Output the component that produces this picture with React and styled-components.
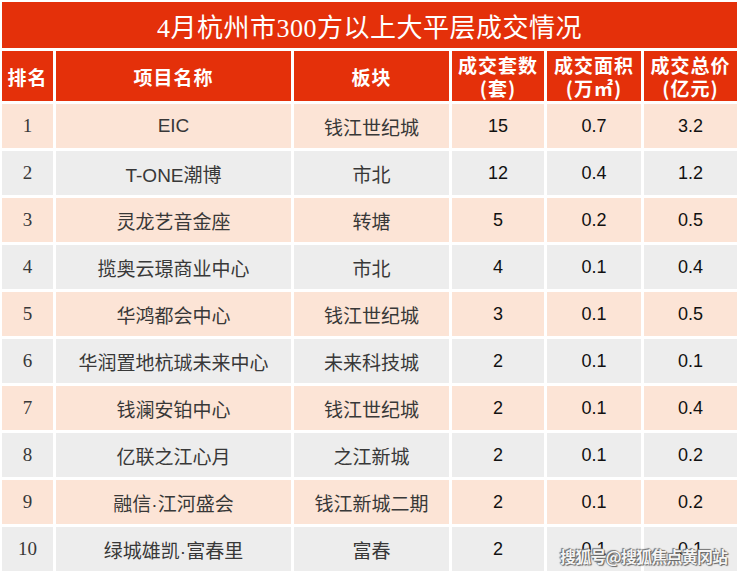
import React from "react";
import styled, { createGlobalStyle } from "styled-components";

const GlobalStyle = createGlobalStyle`
  html, body { margin: 0; padding: 0; background: #fff; }
  body { font-family: "Liberation Sans", "Noto Sans CJK SC", sans-serif; }
`;

const rows = [
  ["1", "EIC", "钱江世纪城", "15", "0.7", "3.2"],
  ["2", "T-ONE潮博", "市北", "12", "0.4", "1.2"],
  ["3", "灵龙艺音金座", "转塘", "5", "0.2", "0.5"],
  ["4", "揽奥云璟商业中心", "市北", "4", "0.1", "0.4"],
  ["5", "华鸿都会中心", "钱江世纪城", "3", "0.1", "0.5"],
  ["6", "华润置地杭珹未来中心", "未来科技城", "2", "0.1", "0.1"],
  ["7", "钱澜安铂中心", "钱江世纪城", "2", "0.1", "0.4"],
  ["8", "亿联之江心月", "之江新城", "2", "0.1", "0.2"],
  ["9", "融信·江河盛会", "钱江新城二期", "2", "0.1", "0.2"],
  ["10", "绿城雄凯·富春里", "富春", "2", "0.1", "0.1"],
];

const Page = styled.div`
  position: relative;
  width: 740px;
  height: 577px;
  padding: 2px 0 0 2px;
  box-sizing: border-box;
  overflow: hidden;
`;

const Table = styled.div`
  display: grid;
  grid-template-columns: 51px 235px 155px 92px 94px 93px;
  grid-template-rows: 46px 50px;
  grid-auto-rows: 44px;
  gap: 3px;
`;

const Title = styled.div`
  grid-column: 1 / -1;
  background: #e4300a;
  color: #fff;
  display: flex;
  align-items: center;
  justify-content: center;
  font-family: "Liberation Serif", "Noto Sans CJK SC", serif;
  font-size: 26px;
  letter-spacing: 0.5px;
  padding-top: 1px;
`;

const Head = styled.div`
  background: #e4300a;
  color: #fff;
  display: flex;
  align-items: center;
  justify-content: center;
  text-align: center;
  white-space: nowrap;
  font-family: "Noto Sans CJK SC", sans-serif;
  font-weight: 700;
  font-size: 19px;
  line-height: 23px;
  letter-spacing: 1px;
`;

const Cell = styled.div`
  background: ${(p) => (p.$odd ? "#fce4d6" : "#ededed")};
  display: flex;
  align-items: center;
  justify-content: center;
  color: ${(p) => (p.$num ? "#111" : "#383838")};
  font-family: ${(p) =>
    p.$serif
      ? `"Liberation Serif", serif`
      : `"Liberation Sans", "Noto Sans CJK SC", sans-serif`};
  font-size: ${(p) => (p.$num ? "18px" : "19px")};
  white-space: nowrap;
`;

const Watermark = styled.div`
  position: absolute;
  left: 560px;
  top: 546px;
  white-space: nowrap;
  font-family: "Noto Sans CJK SC", sans-serif;
  font-weight: 700;
  font-size: 16px;
  line-height: 20px;
  color: rgba(255, 255, 255, 0.95);
  text-shadow: 0 0 1px #555, 1px 1px 1px #666, -1px -1px 1px #777;
  letter-spacing: -0.8px;
`;

const headers = [
  ["排名"],
  ["项目名称"],
  ["板块"],
  ["成交套数", "(套)"],
  ["成交面积", "(万㎡)"],
  ["成交总价", "(亿元)"],
];

export default function App() {
  return (
    <Page>
      <GlobalStyle />
      <Table>
        <Title>4月杭州市300方以上大平层成交情况</Title>
        {headers.map((h, i) => (
          <Head key={i}>
            {h.map((line, j) => (
              <React.Fragment key={j}>
                {j > 0 && <br />}
                {line}
              </React.Fragment>
            ))}
          </Head>
        ))}
        {rows.map((r, i) =>
          r.map((v, j) => (
            <Cell key={i + "-" + j} $odd={i % 2 === 0} $serif={j === 0} $num={j >= 3}>
              {v}
            </Cell>
          ))
        )}
      </Table>
      <Watermark>搜狐号@搜狐焦点黄冈站</Watermark>
    </Page>
  );
}
